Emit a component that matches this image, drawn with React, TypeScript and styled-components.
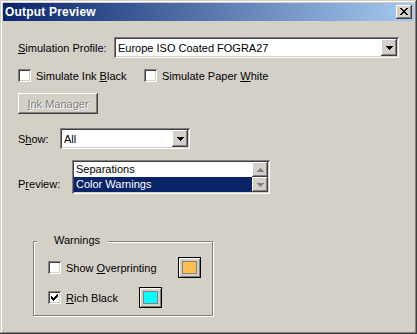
import React from "react";
import styled, { createGlobalStyle } from "styled-components";

const GlobalStyle = createGlobalStyle`
  html, body {
    margin: 0;
    padding: 0;
    background: #d4d0c8;
  }
  body {
    font-family: "Liberation Sans", Arial, sans-serif;
    font-size: 11px;
    color: #000;
  }
`;

const raised = `
  box-shadow: inset -1px -1px #404040, inset 1px 1px #fff,
    inset -2px -2px #808080, inset 2px 2px #d4d0c8;
`;

const sunken = `
  box-shadow: inset 1px 1px #808080, inset -1px -1px #fff,
    inset 2px 2px #404040, inset -2px -2px #d4d0c8;
`;

const Window = styled.div`
  width: 417px;
  height: 334px;
  box-sizing: border-box;
  padding: 3px;
  background: #d4d0c8;
  box-shadow: inset -1px -1px #404040, inset 1px 1px #d4d0c8,
    inset -2px -2px #808080, inset 2px 2px #fff;
  display: flex;
  flex-direction: column;
`;

const TitleBar = styled.div`
  height: 18px;
  display: flex;
  align-items: center;
  justify-content: space-between;
  padding: 0 2px;
  background: linear-gradient(to right, #0a246a, #a6caf0);
`;

const Title = styled.span`
  color: #fff;
  font-weight: bold;
  font-size: 12px;
  letter-spacing: 0.2px;
`;

const CloseButton = styled.div`
  width: 16px;
  height: 14px;
  background: #d4d0c8;
  ${raised}
  display: flex;
  align-items: center;
  justify-content: center;
  padding-bottom: 1px;
  box-sizing: border-box;
`;

const Client = styled.div`
  display: flex;
  flex-direction: column;
  align-items: flex-start;
  padding-left: 15px;
`;

const Row = styled.div<{ $mt: number; $align?: string }>`
  display: flex;
  align-items: ${(p) => p.$align || "center"};
  margin-top: ${(p) => p.$mt}px;
`;

const Label = styled.span<{ $w: number; $pb?: number }>`
  width: ${(p) => p.$w}px;
  padding-bottom: ${(p) => p.$pb || 0}px;
  white-space: nowrap;
`;

const Combo = styled.div<{ $w: number }>`
  width: ${(p) => p.$w}px;
  height: 21px;
  box-sizing: border-box;
  padding: 2px;
  background: #fff;
  ${sunken}
  display: flex;
  align-items: center;
`;

const ComboText = styled.span`
  flex: 1;
  padding-left: 2px;
  white-space: nowrap;
`;

const DropButton = styled.div`
  width: 16px;
  height: 17px;
  background: #d4d0c8;
  ${raised}
  display: flex;
  align-items: center;
  justify-content: center;
`;

const CheckItem = styled.label<{ $w?: number }>`
  display: flex;
  align-items: center;
  gap: 5px;
  width: ${(p) => (p.$w ? `${p.$w}px` : "auto")};
  white-space: nowrap;
`;

const Box = styled.span`
  width: 13px;
  height: 13px;
  box-sizing: border-box;
  background: #fff;
  ${sunken}
  display: flex;
  align-items: center;
  justify-content: center;
`;

const Button = styled.div<{ $w: number }>`
  width: ${(p) => p.$w}px;
  height: 21px;
  box-sizing: border-box;
  background: #d4d0c8;
  ${raised}
  display: flex;
  align-items: center;
  justify-content: center;
  color: #808080;
  text-shadow: 1px 1px #fff;
`;

const ListBox = styled.div`
  width: 198px;
  height: 34px;
  box-sizing: border-box;
  padding: 2px;
  background: #fff;
  ${sunken}
  display: flex;
`;

const Items = styled.div`
  flex: 1;
  display: flex;
  flex-direction: column;
`;

const Item = styled.div<{ $selected?: boolean }>`
  height: 15px;
  line-height: 15px;
  padding-left: 2px;
  background: ${(p) => (p.$selected ? "#0a246a" : "transparent")};
  color: ${(p) => (p.$selected ? "#fff" : "#000")};
`;

const ScrollBar = styled.div`
  width: 16px;
  display: flex;
  flex-direction: column;
`;

const ScrollButton = styled.div`
  height: 15px;
  background: #d4d0c8;
  ${raised}
  display: flex;
  align-items: center;
  justify-content: center;
`;

const Group = styled.div`
  position: relative;
  margin-top: 47px;
  margin-left: 15px;
  width: 180px;
  height: 75px;
  box-sizing: border-box;
  border: 1px solid #808080;
  box-shadow: inset 1px 1px #fff, 1px 1px #fff;
  padding: 15px 0 0 14px;
  display: flex;
  flex-direction: column;
  gap: 9px;
`;

const Legend = styled.span`
  position: absolute;
  top: -8px;
  left: 3px;
  line-height: 13px;
  padding: 0 8px 0 17px;
  background: #d4d0c8;
`;

const GroupRow = styled.div`
  height: 21px;
  display: flex;
  align-items: center;
`;

const ColorButton = styled.div`
  margin-left: 21px;
  width: 23px;
  height: 21px;
  box-sizing: border-box;
  border: 1px solid #000;
  background: #d4d0c8;
  box-shadow: inset 1px 1px #fff, inset -1px -1px #808080;
  display: flex;
  align-items: center;
  justify-content: center;
`;

const Swatch = styled.span<{ $color: string }>`
  width: 15px;
  height: 13px;
  box-sizing: border-box;
  border: 1px solid #808080;
  background: ${(p) => p.$color};
`;

const X_ROWS = ["11000011", "01100110", "00111100", "00011000", "00111100", "01100110", "11000011"];

const CloseGlyph = () => (
  <svg width="8" height="7" shapeRendering="crispEdges">
    {X_ROWS.flatMap((row, y) =>
      row.split("").map((c, x) => (c === "1" ? <rect key={`${x}-${y}`} x={x} y={y} width="1" height="1" fill="#000" /> : null))
    )}
  </svg>
);

const Arrow = ({ up, color = "#000" }: { up?: boolean; color?: string }) => (
  <svg width="7" height="4" shapeRendering="crispEdges">
    <path d={up ? "M3 0h1v1h1v1h1v1h1v1H0V3h1V2h1V1h1z" : "M0 0h7v1H6v1H5v1H4v1H3V3H2V2H1V1H0z"} fill={color} />
  </svg>
);

const CheckGlyph = () => (
  <svg width="7" height="7" shapeRendering="crispEdges">
    <path d="M6 0h1v3H6v1H5v1H4v1H3v1H2V6H1V5H0V2h1v1h1v1h1V3h1V2h1V1h1z" fill="#000" />
  </svg>
);

const CheckBox = ({ checked }: { checked?: boolean }) => <Box>{checked && <CheckGlyph />}</Box>;

export default function App() {
  return (
    <>
      <GlobalStyle />
      <Window>
        <TitleBar>
          <Title>Output Preview</Title>
          <CloseButton>
            <CloseGlyph />
          </CloseButton>
        </TitleBar>
        <Client>
          <Row $mt={16}>
            <Label $w={96}>
              <u>S</u>imulation Profile:
            </Label>
            <Combo $w={285}>
              <ComboText>Europe ISO Coated FOGRA27</ComboText>
              <DropButton>
                <Arrow />
              </DropButton>
            </Combo>
          </Row>

          <Row $mt={11}>
            <CheckItem $w={126}>
              <CheckBox />
              <span>
                Simulate Ink <u>B</u>lack
              </span>
            </CheckItem>
            <CheckItem>
              <CheckBox />
              <span>
                Simulate Paper <u>W</u>hite
              </span>
            </CheckItem>
          </Row>

          <Row $mt={11}>
            <Button $w={80}>
              <span>
                <u>I</u>nk Manager
              </span>
            </Button>
          </Row>

          <Row $mt={14}>
            <Label $w={42}>
              S<u>h</u>ow:
            </Label>
            <Combo $w={130}>
              <ComboText>All</ComboText>
              <DropButton>
                <Arrow />
              </DropButton>
            </Combo>
          </Row>

          <Row $mt={11} $align="flex-end">
            <Label $w={54} $pb={4}>
              P<u>r</u>eview:
            </Label>
            <ListBox>
              <Items>
                <Item>Separations</Item>
                <Item $selected>Color Warnings</Item>
              </Items>
              <ScrollBar>
                <ScrollButton>
                  <Arrow up color="#808080" />
                </ScrollButton>
                <ScrollButton>
                  <Arrow color="#808080" />
                </ScrollButton>
              </ScrollBar>
            </ListBox>
          </Row>

          <Group>
            <Legend>Warnings</Legend>
            <GroupRow>
              <CheckItem>
                <CheckBox />
                <span>
                  Show <u>O</u>verprinting
                </span>
              </CheckItem>
              <ColorButton>
                <Swatch $color="#ffbf4f" />
              </ColorButton>
            </GroupRow>
            <GroupRow>
              <CheckItem>
                <CheckBox checked />
                <span>
                  <u>R</u>ich Black
                </span>
              </CheckItem>
              <ColorButton>
                <Swatch $color="#00ffff" />
              </ColorButton>
            </GroupRow>
          </Group>
        </Client>
      </Window>
    </>
  );
}
